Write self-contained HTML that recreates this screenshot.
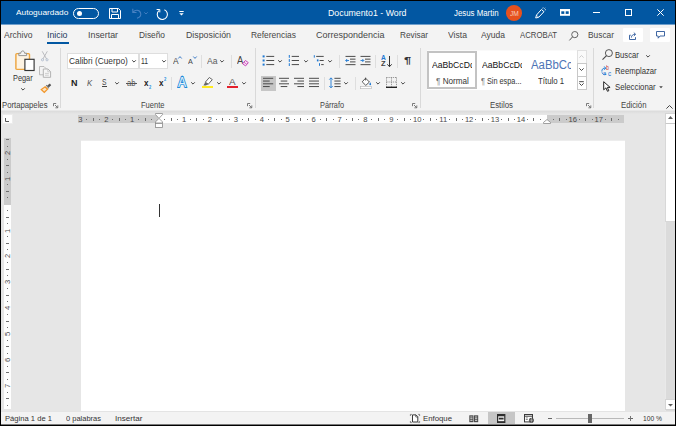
<!DOCTYPE html>
<html lang="es">
<head>
<meta charset="utf-8">
<title>Documento1 - Word</title>
<style>
html,body{margin:0;padding:0;background:#000;}
body{width:676px;height:426px;overflow:hidden;font-family:"Liberation Sans",sans-serif;}
#app{position:relative;width:676px;height:426px;background:#000;overflow:hidden;}
#app>*{position:absolute;overflow:hidden;box-sizing:border-box;}
#app div, #app span, #app svg, #app a, #app button, #app label{position:absolute;box-sizing:border-box;}
#app svg{overflow:visible;}
.t{white-space:nowrap;line-height:1;transform-origin:0 50%;display:block;}

</style>
</head>
<body>
<div id="app">
<header class="titlebar" style="left:1px;top:1px;width:674px;height:24px;background:#0257a2;border-bottom:1px solid #6f9fcc;">
<span class="t" style="left:14.70px;top:8.10px;font-size:8.1px;color:#fff;transform:scaleX(1.0283);">Autoguardado</span>
<div class="toggle" style="left:72px;top:6.5px;width:26px;height:11px;border:1px solid #fff;border-radius:6px;"><div style="left:2.5px;top:2px;width:5px;height:5px;border-radius:50%;background:#fff"></div></div>
<svg style="left:108px;top:7px;" width="12" height="11" viewBox="0 0 12 11"><path d="M0.5 0.5 H9.5 L11.5 2.5 V10.5 H0.5 Z M3 0.5 V4 H8.5 V0.5 M2.5 10.5 V6.5 H9.5 V10.5" fill="none" stroke="#fff" stroke-width="1"/></svg>
<svg style="left:130.5px;top:7px;" width="10" height="11" viewBox="0 0 10 11"><path d="M0.8 0.8 V4.5 H4.5 M1 4.3 C3 1.5 7.5 1.5 8.6 5 C9.3 7.5 7.5 9.5 5 10.3" fill="none" stroke="#4781c2" stroke-width="1.1"/></svg>
<svg style="left:142.5px;top:11px;" width="4" height="3" viewBox="0 0 4 3"><path d="M0.3 0.3 L2 2 L3.7 0.3" fill="none" stroke="#4781c2" stroke-width="0.9"/></svg>
<svg style="left:154.5px;top:6.5px;" width="12" height="12" viewBox="0 0 12 12"><path d="M0.6 1.5 H3.8 V4.4" fill="none" stroke="#fff" stroke-width="1"/><path d="M2.9 2.6 A5.1 5.1 0 1 0 8.4 1.7" fill="none" stroke="#fff" stroke-width="1.1"/></svg>
<svg style="left:178px;top:10px;" width="5" height="5" viewBox="0 0 5 5"><path d="M0.3 0.5 H4.7" stroke="#fff" stroke-width="1"/><path d="M0.3 2.3 L2.5 4.5 L4.7 2.3 Z" fill="#fff"/></svg>
<span class="t" style="left:326.50px;top:8.10px;font-size:8.3px;color:#fff;transform:scaleX(1.0595);">Documento1  -  Word</span>
<span class="t" style="left:452.50px;top:8.10px;font-size:8.3px;color:#fff;transform:scaleX(0.9462);">Jesus Martin</span>
<div class="avatar" style="left:504.5px;top:4px;width:16.5px;height:16px;border-radius:50%;background:#e6511e;"></div>
<span class="t" style="left:508.50px;top:9.10px;font-size:7px;color:#f8cfbb;transform:scaleX(0.9418);">JM</span>
<svg style="left:533.5px;top:6px;" width="12" height="12" viewBox="0 0 12 12"><path d="M1.5 8 L6.4 2.5 L9 4.7 L3.7 10.3 L0.7 11 Z" fill="none" stroke="#fff" stroke-width="1" stroke-linejoin="round"/><path d="M1.6 8.2 L3.5 10.1" stroke="#fff" stroke-width=".7"/><path d="M7.7 1.6 L8.2 0.4 M9.8 3 L11 2.5 M9.3 1.7 L10.2 0.8" stroke="#fff" stroke-width=".8"/></svg>
<svg style="left:559px;top:8px;" width="10" height="6.8" viewBox="0 0 10 6.8"><rect x="0" y="0" width="10" height="6.8" fill="#fff"/><rect x="1.3" y="2.3" width="3" height="2.6" fill="#0257a2"/><rect x="5.7" y="2.3" width="3" height="2.6" fill="#0257a2"/></svg>
<svg style="left:592px;top:11px;" width="7" height="1" viewBox="0 0 7 1"><rect width="7" height="1" fill="#fff"/></svg>
<svg style="left:624px;top:8px;" width="7" height="7" viewBox="0 0 7 7"><rect x="0.5" y="0.5" width="6" height="6" fill="none" stroke="#fff" stroke-width="1"/></svg>
<svg style="left:655.5px;top:8px;" width="7" height="7" viewBox="0 0 7 7"><path d="M0.3 0.3 L6.7 6.7 M6.7 0.3 L0.3 6.7" stroke="#fff" stroke-width="1"/></svg>
</header>
<nav class="tabs" style="left:1px;top:25px;width:674px;height:20px;background:#f3f3f3;">
<a class="t" style="left:2.50px;top:6.10px;font-size:8.6px;color:#464646;transform:scaleX(0.9945);">Archivo</a>
<a class="t" style="left:46.00px;top:6.10px;font-size:8.6px;color:#23395d;transform:scaleX(1.0218);">Inicio</a>
<a class="t" style="left:86.50px;top:6.10px;font-size:8.6px;color:#464646;transform:scaleX(1.0295);">Insertar</a>
<a class="t" style="left:138.00px;top:6.10px;font-size:8.6px;color:#464646;transform:scaleX(0.9714);">Diseño</a>
<a class="t" style="left:184.50px;top:6.10px;font-size:8.6px;color:#464646;transform:scaleX(1.0238);">Disposición</a>
<a class="t" style="left:249.50px;top:6.10px;font-size:8.6px;color:#464646;transform:scaleX(0.9813);">Referencias</a>
<a class="t" style="left:315.00px;top:6.10px;font-size:8.6px;color:#464646;transform:scaleX(1.0466);">Correspondencia</a>
<a class="t" style="left:398.50px;top:6.10px;font-size:8.6px;color:#464646;transform:scaleX(0.9609);">Revisar</a>
<a class="t" style="left:446.50px;top:6.10px;font-size:8.6px;color:#464646;transform:scaleX(1.0025);">Vista</a>
<a class="t" style="left:480.00px;top:6.10px;font-size:8.6px;color:#464646;transform:scaleX(0.9910);">Ayuda</a>
<a class="t" style="left:518.50px;top:6.10px;font-size:8.6px;color:#464646;transform:scaleX(0.9045);">ACROBAT</a>
<div style="left:45.5px;top:17px;width:22.5px;height:2px;background:#0257a2;"></div>
<svg style="left:568px;top:5.5px;" width="9.5" height="10" viewBox="0 0 9.5 10"><circle cx="5.8" cy="3.6" r="3.1" fill="none" stroke="#555" stroke-width=".9"/><path d="M3.6 5.8 L0.4 9.4" stroke="#555" stroke-width="1"/></svg>
<span class="t" style="left:586.50px;top:6.10px;font-size:8.6px;color:#464646;transform:scaleX(0.9720);">Buscar</span>
<div class="btn" style="left:621.5px;top:3px;width:20.5px;height:14px;background:#fff;border-radius:1px;"><svg style="left:6.5px;top:3.5px" width="8" height="8" viewBox="0 0 8 8"><path d="M1.8 3.2 H0.5 V7.5 H6.5 V5.2" fill="none" stroke="#2b579a" stroke-width=".9"/><path d="M2.4 5.6 C2.4 3.4 3.9 2.3 6.2 2.3 M4.8 0.6 L6.6 2.3 L4.8 4" fill="none" stroke="#2b579a" stroke-width=".9"/></svg></div>
<div class="btn" style="left:649px;top:3px;width:20px;height:14px;background:#fff;border-radius:1px;"><svg style="left:6px;top:3px" width="9" height="8" viewBox="0 0 9 8"><path d="M0.5 0.5 H8.5 V5 H4 L2.2 7.2 V5 H0.5 Z" fill="none" stroke="#2b579a" stroke-width=".9"/></svg></div>
</nav>
<section class="ribbon" style="left:1px;top:45px;width:674px;height:66px;background:#f3f3f3;border-bottom:1px solid #e8e8e8;">
<div style="left:59px;top:3px;width:1px;height:60px;background:#d9d9d9;"></div>
<div style="left:254px;top:3px;width:1px;height:60px;background:#d9d9d9;"></div>
<div style="left:419px;top:3px;width:1px;height:60px;background:#d9d9d9;"></div>
<div style="left:592px;top:3px;width:1px;height:60px;background:#d9d9d9;"></div>
<div style="left:200px;top:9.5px;width:1px;height:13.5px;background:#dedede;"></div>
<div style="left:229.5px;top:9.5px;width:1px;height:13.5px;background:#dedede;"></div>
<div style="left:169.5px;top:31.5px;width:1px;height:13.5px;background:#dedede;"></div>
<div style="left:338px;top:9.5px;width:1px;height:13.5px;background:#dedede;"></div>
<div style="left:373.5px;top:9.5px;width:1px;height:13.5px;background:#dedede;"></div>
<div style="left:396px;top:9.5px;width:1px;height:13.5px;background:#dedede;"></div>
<div style="left:323px;top:31.5px;width:1px;height:13.5px;background:#dedede;"></div>
<div style="left:353.5px;top:31.5px;width:1px;height:13.5px;background:#dedede;"></div>
<span class="t" style="left:1.00px;top:56.10px;font-size:8.4px;color:#444;transform:scaleX(0.9218);">Portapapeles</span>
<span class="t" style="left:140.00px;top:56.10px;font-size:8.4px;color:#444;transform:scaleX(0.9011);">Fuente</span>
<span class="t" style="left:319.00px;top:56.10px;font-size:8.4px;color:#444;transform:scaleX(0.8737);">Párrafo</span>
<span class="t" style="left:489.00px;top:56.10px;font-size:8.4px;color:#444;transform:scaleX(0.9322);">Estilos</span>
<span class="t" style="left:619.50px;top:56.10px;font-size:8.4px;color:#444;transform:scaleX(0.9283);">Edición</span>
<svg style="left:51.9px;top:58.1px;" width="5" height="5" viewBox="0 0 5 5"><path d="M0.5 3.2 V0.5 H3.2 M2 2 L4.6 4.6 M4.8 2.4 V4.8 H2.4" fill="none" stroke="#666" stroke-width=".85"/></svg>
<svg style="left:245.8px;top:58.1px;" width="5" height="5" viewBox="0 0 5 5"><path d="M0.5 3.2 V0.5 H3.2 M2 2 L4.6 4.6 M4.8 2.4 V4.8 H2.4" fill="none" stroke="#666" stroke-width=".85"/></svg>
<svg style="left:410.7px;top:58.1px;" width="5" height="5" viewBox="0 0 5 5"><path d="M0.5 3.2 V0.5 H3.2 M2 2 L4.6 4.6 M4.8 2.4 V4.8 H2.4" fill="none" stroke="#666" stroke-width=".85"/></svg>
<svg style="left:584.5px;top:58.1px;" width="5" height="5" viewBox="0 0 5 5"><path d="M0.5 3.2 V0.5 H3.2 M2 2 L4.6 4.6 M4.8 2.4 V4.8 H2.4" fill="none" stroke="#666" stroke-width=".85"/></svg>
<svg style="left:664.5px;top:60px;" width="7" height="4" viewBox="0 0 7 4"><path d="M0.4 3.6 L3.5 0.5 L6.6 3.6" fill="none" stroke="#444" stroke-width="1"/></svg>
<svg style="left:14px;top:5px;" width="20" height="21" viewBox="0 0 20 21"><rect x="0.9" y="3.6" width="13.6" height="15.8" rx="1" fill="#fdf3e3" stroke="#eda43c" stroke-width="1.4"/><path d="M3.8 5.6 V3.2 H5.8 C5.8 0.2 9.6 0.2 9.6 3.2 H11.6 V5.6 Z" fill="#f3f3f3" stroke="#8a8a8a" stroke-width=".9"/><rect x="9.9" y="9.3" width="9.2" height="11.2" fill="#fff" stroke="#333" stroke-width="1.15"/></svg>
<span class="t" style="left:12.00px;top:29.10px;font-size:8.4px;color:#333;transform:scaleX(0.8766);">Pegar</span>
<svg style="left:19.5px;top:43.25px;" width="4" height="2.5" viewBox="0 0 4 2.5"><path d="M0.2 0.3 L2 2.1 L3.8 0.3" fill="none" stroke="#444" stroke-width="1"/></svg>
<svg style="left:40px;top:5.5px;" width="7.5" height="10.5" viewBox="0 0 7.5 10.5"><path d="M1.2 0.3 L5.6 8 M6.3 0.3 L1.9 8" stroke="#b4b6ba" stroke-width=".9" fill="none"/><circle cx="1.5" cy="8.8" r="1.1" fill="none" stroke="#a9b6c9" stroke-width=".8"/><circle cx="6" cy="8.8" r="1.1" fill="none" stroke="#a9b6c9" stroke-width=".8"/></svg>
<svg style="left:38px;top:21.3px;" width="12" height="12" viewBox="0 0 12 12"><path d="M0.5 0.5 H5 L7 2.5 V8.8 H0.5 Z" fill="#f3f3f3" stroke="#b5b5b5" stroke-width=".9"/><path d="M4.3 3 H9 L11.6 5.6 V11.3 H4.3 Z" fill="#f6f6f6" stroke="#ababab" stroke-width=".9"/><path d="M8.8 3.2 V5.8 H11.4 M6 7.4 H9.8 M6 9.2 H9.8" fill="none" stroke="#bdbdbd" stroke-width=".7"/></svg>
<svg style="left:38.5px;top:37.5px;" width="11.5" height="10.5" viewBox="0 0 11.5 10.5"><path d="M7.2 2.5 L9.9 0.5 L11.2 2.2 L8.7 4.4 Z" fill="#555"/><path d="M5.8 2.5 L6.7 1.8 L9.3 4.9 L8.4 5.6 Z" fill="#777"/><path d="M5.2 2.9 L8.6 6.1 L4.3 10.2 L0.3 6.4 Z" fill="#f1962a"/><path d="M4.9 4.8 L6.7 6.3 L4.2 8.6 L2.2 6.6 Z" fill="#fde3c0"/></svg>
<div class="combo" style="left:66px;top:8px;width:71.5px;height:15.5px;background:#fff;border:1px solid #dedede;"></div>
<div class="combo" style="left:138px;top:8px;width:28.5px;height:15.5px;background:#fff;border:1px solid #dedede;"></div>
<span class="t" style="left:67.70px;top:12.10px;font-size:8.3px;color:#333;transform:scaleX(1.0041);">Calibri (Cuerpo)</span>
<svg style="left:131px;top:15.25px;" width="4" height="2.5" viewBox="0 0 4 2.5"><path d="M0.2 0.3 L2 2.1 L3.8 0.3" fill="none" stroke="#444" stroke-width="1"/></svg>
<span class="t" style="left:140.00px;top:13.10px;font-size:8.2px;color:#333;transform:scaleX(0.8235);">11</span>
<svg style="left:160.5px;top:15.25px;" width="4" height="2.5" viewBox="0 0 4 2.5"><path d="M0.2 0.3 L2 2.1 L3.8 0.3" fill="none" stroke="#444" stroke-width="1"/></svg>
<span class="t" style="left:171.60px;top:12.10px;font-size:8.8px;color:#444;transform:scaleX(0.9532);">A</span>
<svg style="left:176.8px;top:10.5px;" width="4" height="3" viewBox="0 0 4 3"><path d="M0.3 2.5 L2 0.6 L3.7 2.5" fill="none" stroke="#2b6fc2" stroke-width=".9"/></svg>
<span class="t" style="left:187.00px;top:13.10px;font-size:8px;color:#444;transform:scaleX(0.8982);">A</span>
<svg style="left:191.5px;top:10.5px;" width="4" height="3" viewBox="0 0 4 3"><path d="M0.3 0.5 L2 2.4 L3.7 0.5" fill="none" stroke="#2b6fc2" stroke-width=".9"/></svg>
<span class="t" style="left:205.50px;top:12.10px;font-size:9px;color:#5a5a5a;transform:scaleX(0.9532);">Aa</span>
<svg style="left:219px;top:15.25px;" width="4" height="2.5" viewBox="0 0 4 2.5"><path d="M0.2 0.3 L2 2.1 L3.8 0.3" fill="none" stroke="#444" stroke-width="1"/></svg>
<span class="t" style="left:236.30px;top:10.10px;font-size:11.5px;color:#444;transform:scaleX(0.8212);">A</span>
<svg style="left:241px;top:15px;" width="7" height="6.5" viewBox="0 0 7 6.5"><path d="M3.4 0.5 L6.3 2.6 L3.6 5.9 L0.6 3.8 Z" fill="#fbe6f6" stroke="#c239b3" stroke-width=".9"/><path d="M1.9 2.2 L4.9 4.4" stroke="#c239b3" stroke-width=".7"/></svg>
<span class="t" style="left:69.70px;top:33.10px;font-size:9.8px;color:#222;transform:scaleX(0.9183);font-weight:bold;">N</span>
<span class="t" style="left:86.00px;top:34.10px;font-size:9.3px;color:#555;transform:scaleX(0.8383);font-style:italic;">K</span>
<span class="t" style="left:101.30px;top:33.10px;font-size:9px;color:#444;transform:scaleX(0.7481);">S</span>
<div style="left:101px;top:41px;width:5px;height:1px;background:#444;"></div>
<svg style="left:113.5px;top:36.75px;" width="4" height="2.5" viewBox="0 0 4 2.5"><path d="M0.2 0.3 L2 2.1 L3.8 0.3" fill="none" stroke="#444" stroke-width="1"/></svg>
<span class="t" style="left:125.80px;top:34.10px;font-size:9px;color:#555;transform:scaleX(0.8387);">ab</span>
<div style="left:124.5px;top:38px;width:11px;height:1px;background:#555;"></div>
<span class="t" style="left:142.50px;top:33.10px;font-size:9.5px;color:#222;transform:scaleX(0.8496);font-weight:bold;">x</span>
<span class="t" style="left:148.20px;top:41.10px;font-size:4.6px;color:#1e90e0;transform:scaleX(0.8585);font-weight:bold;">2</span>
<span class="t" style="left:157.50px;top:33.10px;font-size:9.5px;color:#222;transform:scaleX(0.8496);font-weight:bold;">x</span>
<span class="t" style="left:163.00px;top:33.10px;font-size:4.6px;color:#1e90e0;transform:scaleX(0.8976);font-weight:bold;">2</span>
<span class="t" style="left:177.20px;top:31.10px;font-size:13.8px;color:#e4f1fb;transform:scaleX(0.8801);-webkit-text-stroke:1.9px #1f8cda;paint-order:stroke fill;">A</span>
<svg style="left:190px;top:36.75px;" width="4" height="2.5" viewBox="0 0 4 2.5"><path d="M0.2 0.3 L2 2.1 L3.8 0.3" fill="none" stroke="#444" stroke-width="1"/></svg>
<svg style="left:201px;top:31.5px;" width="11" height="9" viewBox="0 0 11 9"><path d="M7.3 0.5 L10.3 2.6 L6.3 7.2 L3.3 5.2 Z" fill="#fff" stroke="#555" stroke-width=".9"/><path d="M3.3 5.2 L6.3 7.2 L3.8 8.6 L1.4 8.4 Z" fill="#666"/></svg>
<div style="left:200.5px;top:41px;width:11px;height:2.3px;background:#ffea1e;"></div>
<svg style="left:216px;top:36.75px;" width="4" height="2.5" viewBox="0 0 4 2.5"><path d="M0.2 0.3 L2 2.1 L3.8 0.3" fill="none" stroke="#444" stroke-width="1"/></svg>
<span class="t" style="left:228.20px;top:32.10px;font-size:9.8px;color:#555;transform:scaleX(1.0081);">A</span>
<div style="left:226px;top:41px;width:11px;height:2.3px;background:#e3202c;"></div>
<svg style="left:241px;top:36.75px;" width="4" height="2.5" viewBox="0 0 4 2.5"><path d="M0.2 0.3 L2 2.1 L3.8 0.3" fill="none" stroke="#444" stroke-width="1"/></svg>
<svg style="left:261px;top:9px;" width="13" height="13" viewBox="0 0 13 13"><rect x="0.6" y="1.4" width="2" height="2" fill="#1e78d2"/><path d="M4.3 2.4 H12.2" stroke="#4a4a4a" stroke-width="1"/><rect x="0.6" y="5.5" width="2" height="2" fill="#1e78d2"/><path d="M4.3 6.5 H12.2" stroke="#4a4a4a" stroke-width="1"/><rect x="0.6" y="9.6" width="2" height="2" fill="#1e78d2"/><path d="M4.3 10.6 H12.2" stroke="#4a4a4a" stroke-width="1"/></svg>
<svg style="left:277.4px;top:15.25px;" width="4" height="2.5" viewBox="0 0 4 2.5"><path d="M0.2 0.3 L2 2.1 L3.8 0.3" fill="none" stroke="#444" stroke-width="1"/></svg>
<svg style="left:287px;top:9px;" width="12" height="13" viewBox="0 0 12 13"><rect x="0.8" y="1" width="1" height="2.8" fill="#1e78d2"/><path d="M3.7 2.4 H11" stroke="#4a4a4a" stroke-width="1"/><rect x="0.8" y="5.1" width="1" height="2.8" fill="#1e78d2"/><path d="M3.7 6.5 H11" stroke="#4a4a4a" stroke-width="1"/><rect x="0.8" y="9.2" width="1" height="2.8" fill="#1e78d2"/><path d="M3.7 10.6 H11" stroke="#4a4a4a" stroke-width="1"/></svg>
<svg style="left:302.8px;top:15.25px;" width="4" height="2.5" viewBox="0 0 4 2.5"><path d="M0.2 0.3 L2 2.1 L3.8 0.3" fill="none" stroke="#444" stroke-width="1"/></svg>
<svg style="left:312px;top:9px;" width="12" height="13" viewBox="0 0 12 13"><rect x="0.8" y="1.2" width="1" height="2.4" fill="#1e78d2"/><path d="M3.2 2.4 H10.7" stroke="#4a4a4a" stroke-width="1"/><rect x="3.9" y="5.4" width="1.6" height="2" fill="#1e78d2"/><path d="M6.6 6.5 H10.7" stroke="#4a4a4a" stroke-width="1"/><rect x="6" y="9.2" width="1" height="2.6" fill="#1e78d2"/><path d="M8.2 10.6 H10.7" stroke="#4a4a4a" stroke-width="1"/></svg>
<svg style="left:326.7px;top:15.25px;" width="4" height="2.5" viewBox="0 0 4 2.5"><path d="M0.2 0.3 L2 2.1 L3.8 0.3" fill="none" stroke="#444" stroke-width="1"/></svg>
<svg style="left:343.5px;top:10px;" width="11" height="11" viewBox="0 0 11 11"><path d="M0.5 1.4 H10.5" stroke="#4a4a4a" stroke-width="1"/><path d="M5 4.15 H10.5" stroke="#4a4a4a" stroke-width="1"/><path d="M5 6.9 H10.5" stroke="#4a4a4a" stroke-width="1"/><path d="M0.5 9.65 H10.5" stroke="#4a4a4a" stroke-width="1"/><path d="M4 5.5 H0.8 M2.2 4 L0.7 5.5 L2.2 7" fill="none" stroke="#1e78d2" stroke-width=".9"/></svg>
<svg style="left:359px;top:10px;" width="11" height="11" viewBox="0 0 11 11"><path d="M0.5 1.4 H10.5" stroke="#4a4a4a" stroke-width="1"/><path d="M5 4.15 H10.5" stroke="#4a4a4a" stroke-width="1"/><path d="M5 6.9 H10.5" stroke="#4a4a4a" stroke-width="1"/><path d="M0.5 9.65 H10.5" stroke="#4a4a4a" stroke-width="1"/><path d="M0.5 5.5 H3.7 M2.3 4 L3.8 5.5 L2.3 7" fill="none" stroke="#1e78d2" stroke-width=".9"/></svg>
<span class="t" style="left:380.00px;top:10.10px;font-size:6.6px;color:#1e78d2;transform:scaleX(1.0072);font-weight:bold;">A</span>
<span class="t" style="left:380.00px;top:16.10px;font-size:6.4px;color:#444;transform:scaleX(1.1776);font-weight:bold;">Z</span>
<svg style="left:385.8px;top:10.5px;" width="5" height="11.5" viewBox="0 0 5 11.5"><path d="M2.5 0 V10.6 M0.3 8.3 L2.5 10.7 L4.7 8.3" fill="none" stroke="#333" stroke-width="1"/></svg>
<span class="t" style="left:402.60px;top:11.10px;font-size:8.8px;color:#333;transform:scaleX(1.4675);font-weight:bold;">¶</span>
<div style="left:260px;top:31px;width:15px;height:15px;background:#c6c6c6;"></div>
<svg style="left:262.3px;top:32px;" width="11" height="11" viewBox="0 0 11 11"><path d="M0 1.3 H10.2" stroke="#4a4a4a" stroke-width="1"/><path d="M0 4.05 H6.7" stroke="#4a4a4a" stroke-width="1"/><path d="M0 6.8 H10.2" stroke="#4a4a4a" stroke-width="1"/><path d="M0 9.55 H6.7" stroke="#4a4a4a" stroke-width="1"/></svg>
<svg style="left:277.7px;top:32px;" width="11" height="11" viewBox="0 0 11 11"><path d="M0 1.3 H10" stroke="#4a4a4a" stroke-width="1"/><path d="M1.7 4.05 H8.3" stroke="#4a4a4a" stroke-width="1"/><path d="M0 6.8 H10" stroke="#4a4a4a" stroke-width="1"/><path d="M1.7 9.55 H8.3" stroke="#4a4a4a" stroke-width="1"/></svg>
<svg style="left:292.8px;top:32px;" width="11" height="11" viewBox="0 0 11 11"><path d="M0 1.3 H10" stroke="#4a4a4a" stroke-width="1"/><path d="M3.4 4.05 H10" stroke="#4a4a4a" stroke-width="1"/><path d="M0 6.8 H10" stroke="#4a4a4a" stroke-width="1"/><path d="M3.4 9.55 H10" stroke="#4a4a4a" stroke-width="1"/></svg>
<svg style="left:307.8px;top:32px;" width="11" height="11" viewBox="0 0 11 11"><path d="M0 1.3 H10" stroke="#4a4a4a" stroke-width="1"/><path d="M0 4.05 H10" stroke="#4a4a4a" stroke-width="1"/><path d="M0 6.8 H10" stroke="#4a4a4a" stroke-width="1"/><path d="M0 9.55 H10" stroke="#4a4a4a" stroke-width="1"/></svg>
<svg style="left:328px;top:32px;" width="12" height="12" viewBox="0 0 12 12"><path d="M2 1 V10.6 M0.3 2.6 L2 0.8 L3.7 2.6 M0.3 9 L2 10.8 L3.7 9" fill="none" stroke="#1e78d2" stroke-width=".9"/><path d="M5.4 1.3 H11.6" stroke="#4a4a4a" stroke-width="1"/><path d="M5.4 4.05 H11.6" stroke="#4a4a4a" stroke-width="1"/><path d="M5.4 6.8 H11.6" stroke="#4a4a4a" stroke-width="1"/><path d="M5.4 9.55 H11.6" stroke="#4a4a4a" stroke-width="1"/></svg>
<svg style="left:342.7px;top:36.75px;" width="4" height="2.5" viewBox="0 0 4 2.5"><path d="M0.2 0.3 L2 2.1 L3.8 0.3" fill="none" stroke="#444" stroke-width="1"/></svg>
<svg style="left:359px;top:31.5px;" width="12" height="12" viewBox="0 0 12 12"><path d="M5.6 1.2 L9.4 5 L5.8 8.4 L2.2 4.8 Z" fill="#fff" stroke="#444" stroke-width=".9"/><path d="M5.6 0.6 V3.4" stroke="#444" stroke-width=".9"/><path d="M10.2 5.2 C11.4 7 11.4 8.2 10.2 8.2 C9.1 8.2 9.1 7 10.2 5.2 Z" fill="#1e78d2"/><rect x="0.3" y="9.6" width="11.2" height="2.1" fill="#fff" stroke="#b5b5b5" stroke-width=".6"/></svg>
<svg style="left:374.8px;top:36.75px;" width="4" height="2.5" viewBox="0 0 4 2.5"><path d="M0.2 0.3 L2 2.1 L3.8 0.3" fill="none" stroke="#444" stroke-width="1"/></svg>
<svg style="left:384.5px;top:32px;" width="11" height="11.5" viewBox="0 0 11 11.5"><path d="M0.5 0.5 H10.5 M0.5 5 H10.5 M0.5 0.5 V9.5 M5.5 0.5 V9.5 M10.5 0.5 V9.5" fill="none" stroke="#777" stroke-width=".9" stroke-dasharray="1 1.1"/><path d="M0 10.3 H11" stroke="#222" stroke-width="1.4"/></svg>
<svg style="left:400px;top:36.75px;" width="4" height="2.5" viewBox="0 0 4 2.5"><path d="M0.2 0.3 L2 2.1 L3.8 0.3" fill="none" stroke="#444" stroke-width="1"/></svg>
<div class="gallery" style="left:426px;top:5px;width:149.5px;height:40px;background:#fff;border-top:1px solid #fafafa;"></div>
<div class="sel" style="left:426px;top:6px;width:50px;height:38px;border:2px solid #c3c3c3;background:#fff;"></div>
<span class="t" style="left:434.50px;top:33.10px;font-size:8.2px;color:#333;transform:scaleX(0.9946);"><span style="position:static;color:#777">¶</span> Normal</span>
<span class="t" style="left:480.20px;top:33.10px;font-size:8.2px;color:#333;transform:scaleX(0.8926);"><span style="position:static;color:#777">¶</span> Sin espa...</span>
<span class="t" style="left:536.60px;top:33.10px;font-size:8.2px;color:#333;transform:scaleX(0.9593);">Título 1</span>
<div style="left:575.5px;top:5px;width:10.5px;height:13.5px;background:#fafafa;border:1px solid #e0e0e0;"></div>
<div style="left:575.5px;top:18px;width:10.5px;height:13.5px;background:#fff;border:1px solid #c8c8c8;"></div>
<div style="left:575.5px;top:31px;width:10.5px;height:14px;background:#fff;border:1px solid #c8c8c8;"></div>
<svg style="left:578.4px;top:9.8px;" width="5" height="3" viewBox="0 0 5 3"><path d="M0.4 2.6 L2.5 0.5 L4.6 2.6" fill="none" stroke="#c8c8c8" stroke-width=".9"/></svg>
<svg style="left:578.4px;top:23.4px;" width="5" height="3" viewBox="0 0 5 3"><path d="M0.4 0.4 L2.5 2.5 L4.6 0.4" fill="none" stroke="#444" stroke-width="1"/></svg>
<svg style="left:578.4px;top:35.6px;" width="5" height="6" viewBox="0 0 5 6"><path d="M0.2 0.7 H4.8" stroke="#444" stroke-width="1"/><path d="M0.4 2.4 L2.5 4.5 L4.6 2.4" fill="none" stroke="#444" stroke-width="1"/></svg>
<svg style="left:601px;top:4px;" width="11.5" height="11" viewBox="0 0 11.5 11"><circle cx="6.9" cy="4.1" r="3.5" fill="none" stroke="#444" stroke-width=".9"/><path d="M4.5 6.7 L0.5 10.6" stroke="#444" stroke-width="1.1"/></svg>
<span class="t" style="left:613.80px;top:6.10px;font-size:8.6px;color:#333;transform:scaleX(0.8897);">Buscar</span>
<svg style="left:645px;top:9.55px;" width="4" height="2.5" viewBox="0 0 4 2.5"><path d="M0.2 0.3 L2 2.1 L3.8 0.3" fill="none" stroke="#444" stroke-width="1"/></svg>
<svg style="left:599.5px;top:20px;" width="11" height="11" viewBox="0 0 11 11"><path d="M0.9 6.6 C0.5 4.2 2.4 2.6 4.6 3.2 M3.2 1.4 L4.9 3.3 L2.9 4.7" fill="none" stroke="#1e78d2" stroke-width=".9"/><path d="M5.2 9.4 C3.3 10.3 1.3 9.2 1 7.4" fill="none" stroke="#1e78d2" stroke-width=".9"/></svg>
<span class="t" style="left:605.20px;top:20.10px;font-size:6.8px;color:#c8372d;transform:scaleX(0.7405);">b</span>
<span class="t" style="left:606.80px;top:26.10px;font-size:6.6px;color:#1e78d2;transform:scaleX(0.9706);">c</span>
<span class="t" style="left:601.60px;top:25.10px;font-size:6px;color:#1e78d2;transform:scaleX(0.9570);">a</span>
<span class="t" style="left:613.80px;top:22.10px;font-size:8.6px;color:#333;transform:scaleX(0.8998);">Reemplazar</span>
<svg style="left:602px;top:36.2px;" width="8" height="11" viewBox="0 0 8 11"><path d="M0.7 0.7 V8.8 L2.9 6.9 L4.5 10.3 L5.8 9.7 L4.3 6.4 H7.1 Z" fill="#fff" stroke="#222" stroke-width="1"/></svg>
<span class="t" style="left:613.80px;top:38.10px;font-size:8.6px;color:#333;transform:scaleX(0.9063);">Seleccionar</span>
<svg style="left:657.6px;top:40.6px;" width="4" height="2.5" viewBox="0 0 4 2.5"><path d="M0.2 0.2 L2 2.2 L3.8 0.2 Z" fill="#444"/></svg>
</section>
<div class="cell" style="left:430px;top:58px;width:41.7px;height:14px;background:transparent;">
<span class="t" style="left:2.30px;top:3.10px;font-size:8.5px;color:#111;transform:scaleX(1.0150);">AaBbCcDc</span>
</div>
<div class="cell" style="left:480px;top:58px;width:41.8px;height:14px;background:transparent;">
<span class="t" style="left:2.20px;top:3.10px;font-size:8.5px;color:#111;transform:scaleX(1.0174);">AaBbCcDc</span>
</div>
<div class="cell" style="left:529px;top:56px;width:42px;height:17px;background:transparent;">
<span class="t" style="left:2.00px;top:3.10px;font-size:12px;color:#4d74b6;transform:scaleX(0.9471);">AaBbCc</span>
</div>
<main class="workspace" style="left:1px;top:111px;width:674px;height:300px;background:#e6e6e6;">
<div style="left:0px;top:0px;width:674px;height:3px;background:linear-gradient(#dbdbdb,#e6e6e6);"></div>
<div style="left:1px;top:3px;width:10.5px;height:10px;background:#fdfdfd;border:1px solid #ececec;"></div>
<svg style="left:4.1px;top:7px;" width="4" height="4" viewBox="0 0 4 4"><path d="M0.5 0 V3.5 H4" fill="none" stroke="#555" stroke-width="1"/></svg>
<div class="hruler" style="left:77px;top:4px;width:546px;height:8px;background:#fefefe;"></div>
<div style="left:77px;top:4px;width:79.5px;height:8px;background:#cbcbcb;"></div>
<div style="left:546px;top:4px;width:77px;height:8px;background:#cbcbcb;"></div>
<span class="t" style="left:79.34px;top:5.10px;font-size:7.6px;color:#4a4a4a;transform:scaleX(1.0000);width:14px;margin-left:-7px;text-align:center;">3</span>
<span class="t" style="left:105.26px;top:5.10px;font-size:7.6px;color:#4a4a4a;transform:scaleX(1.0000);width:14px;margin-left:-7px;text-align:center;">2</span>
<span class="t" style="left:131.18px;top:5.10px;font-size:7.6px;color:#4a4a4a;transform:scaleX(1.0000);width:14px;margin-left:-7px;text-align:center;">1</span>
<span class="t" style="left:183.02px;top:5.10px;font-size:7.6px;color:#4a4a4a;transform:scaleX(1.0000);width:14px;margin-left:-7px;text-align:center;">1</span>
<span class="t" style="left:208.94px;top:5.10px;font-size:7.6px;color:#4a4a4a;transform:scaleX(1.0000);width:14px;margin-left:-7px;text-align:center;">2</span>
<span class="t" style="left:234.86px;top:5.10px;font-size:7.6px;color:#4a4a4a;transform:scaleX(1.0000);width:14px;margin-left:-7px;text-align:center;">3</span>
<span class="t" style="left:260.78px;top:5.10px;font-size:7.6px;color:#4a4a4a;transform:scaleX(1.0000);width:14px;margin-left:-7px;text-align:center;">4</span>
<span class="t" style="left:286.70px;top:5.10px;font-size:7.6px;color:#4a4a4a;transform:scaleX(1.0000);width:14px;margin-left:-7px;text-align:center;">5</span>
<span class="t" style="left:312.62px;top:5.10px;font-size:7.6px;color:#4a4a4a;transform:scaleX(1.0000);width:14px;margin-left:-7px;text-align:center;">6</span>
<span class="t" style="left:338.54px;top:5.10px;font-size:7.6px;color:#4a4a4a;transform:scaleX(1.0000);width:14px;margin-left:-7px;text-align:center;">7</span>
<span class="t" style="left:364.46px;top:5.10px;font-size:7.6px;color:#4a4a4a;transform:scaleX(1.0000);width:14px;margin-left:-7px;text-align:center;">8</span>
<span class="t" style="left:390.38px;top:5.10px;font-size:7.6px;color:#4a4a4a;transform:scaleX(1.0000);width:14px;margin-left:-7px;text-align:center;">9</span>
<span class="t" style="left:416.30px;top:5.10px;font-size:7.6px;color:#4a4a4a;transform:scaleX(1.0000);width:14px;margin-left:-7px;text-align:center;">10</span>
<span class="t" style="left:442.22px;top:5.10px;font-size:7.6px;color:#4a4a4a;transform:scaleX(1.0000);width:14px;margin-left:-7px;text-align:center;">11</span>
<span class="t" style="left:468.14px;top:5.10px;font-size:7.6px;color:#4a4a4a;transform:scaleX(1.0000);width:14px;margin-left:-7px;text-align:center;">12</span>
<span class="t" style="left:494.06px;top:5.10px;font-size:7.6px;color:#4a4a4a;transform:scaleX(1.0000);width:14px;margin-left:-7px;text-align:center;">13</span>
<span class="t" style="left:519.98px;top:5.10px;font-size:7.6px;color:#4a4a4a;transform:scaleX(1.0000);width:14px;margin-left:-7px;text-align:center;">14</span>
<span class="t" style="left:571.82px;top:5.10px;font-size:7.6px;color:#4a4a4a;transform:scaleX(1.0000);width:14px;margin-left:-7px;text-align:center;">16</span>
<span class="t" style="left:597.74px;top:5.10px;font-size:7.6px;color:#4a4a4a;transform:scaleX(1.0000);width:14px;margin-left:-7px;text-align:center;">17</span>
<svg style="left:77px;top:4px;" width="546" height="8" viewBox="0 0 546 8"><rect x="8" y="4" width="1" height="1" fill="#6e6e6e"/><rect x="15" y="3" width="1" height="3" fill="#6e6e6e"/><rect x="21" y="4" width="1" height="1" fill="#6e6e6e"/><rect x="34" y="4" width="1" height="1" fill="#6e6e6e"/><rect x="41" y="3" width="1" height="3" fill="#6e6e6e"/><rect x="47" y="4" width="1" height="1" fill="#6e6e6e"/><rect x="60" y="4" width="1" height="1" fill="#6e6e6e"/><rect x="67" y="3" width="1" height="3" fill="#6e6e6e"/><rect x="73" y="4" width="1" height="1" fill="#6e6e6e"/><rect x="86" y="4" width="1" height="1" fill="#6e6e6e"/><rect x="93" y="3" width="1" height="3" fill="#6e6e6e"/><rect x="99" y="4" width="1" height="1" fill="#6e6e6e"/><rect x="112" y="4" width="1" height="1" fill="#6e6e6e"/><rect x="118" y="3" width="1" height="3" fill="#6e6e6e"/><rect x="125" y="4" width="1" height="1" fill="#6e6e6e"/><rect x="138" y="4" width="1" height="1" fill="#6e6e6e"/><rect x="144" y="3" width="1" height="3" fill="#6e6e6e"/><rect x="151" y="4" width="1" height="1" fill="#6e6e6e"/><rect x="164" y="4" width="1" height="1" fill="#6e6e6e"/><rect x="170" y="3" width="1" height="3" fill="#6e6e6e"/><rect x="177" y="4" width="1" height="1" fill="#6e6e6e"/><rect x="190" y="4" width="1" height="1" fill="#6e6e6e"/><rect x="196" y="3" width="1" height="3" fill="#6e6e6e"/><rect x="203" y="4" width="1" height="1" fill="#6e6e6e"/><rect x="216" y="4" width="1" height="1" fill="#6e6e6e"/><rect x="222" y="3" width="1" height="3" fill="#6e6e6e"/><rect x="229" y="4" width="1" height="1" fill="#6e6e6e"/><rect x="242" y="4" width="1" height="1" fill="#6e6e6e"/><rect x="248" y="3" width="1" height="3" fill="#6e6e6e"/><rect x="255" y="4" width="1" height="1" fill="#6e6e6e"/><rect x="268" y="4" width="1" height="1" fill="#6e6e6e"/><rect x="274" y="3" width="1" height="3" fill="#6e6e6e"/><rect x="280" y="4" width="1" height="1" fill="#6e6e6e"/><rect x="293" y="4" width="1" height="1" fill="#6e6e6e"/><rect x="300" y="3" width="1" height="3" fill="#6e6e6e"/><rect x="306" y="4" width="1" height="1" fill="#6e6e6e"/><rect x="319" y="4" width="1" height="1" fill="#6e6e6e"/><rect x="326" y="3" width="1" height="3" fill="#6e6e6e"/><rect x="332" y="4" width="1" height="1" fill="#6e6e6e"/><rect x="345" y="4" width="1" height="1" fill="#6e6e6e"/><rect x="352" y="3" width="1" height="3" fill="#6e6e6e"/><rect x="358" y="4" width="1" height="1" fill="#6e6e6e"/><rect x="371" y="4" width="1" height="1" fill="#6e6e6e"/><rect x="378" y="3" width="1" height="3" fill="#6e6e6e"/><rect x="384" y="4" width="1" height="1" fill="#6e6e6e"/><rect x="397" y="4" width="1" height="1" fill="#6e6e6e"/><rect x="404" y="3" width="1" height="3" fill="#6e6e6e"/><rect x="410" y="4" width="1" height="1" fill="#6e6e6e"/><rect x="423" y="4" width="1" height="1" fill="#6e6e6e"/><rect x="430" y="3" width="1" height="3" fill="#6e6e6e"/><rect x="436" y="4" width="1" height="1" fill="#6e6e6e"/><rect x="449" y="4" width="1" height="1" fill="#6e6e6e"/><rect x="455" y="3" width="1" height="3" fill="#6e6e6e"/><rect x="462" y="4" width="1" height="1" fill="#6e6e6e"/><rect x="475" y="4" width="1" height="1" fill="#6e6e6e"/><rect x="481" y="3" width="1" height="3" fill="#6e6e6e"/><rect x="488" y="4" width="1" height="1" fill="#6e6e6e"/><rect x="501" y="4" width="1" height="1" fill="#6e6e6e"/><rect x="507" y="3" width="1" height="3" fill="#6e6e6e"/><rect x="514" y="4" width="1" height="1" fill="#6e6e6e"/><rect x="527" y="4" width="1" height="1" fill="#6e6e6e"/><rect x="533" y="3" width="1" height="3" fill="#6e6e6e"/><rect x="540" y="4" width="1" height="1" fill="#6e6e6e"/></svg>
<svg style="left:153.5px;top:2px;" width="8" height="15" viewBox="0 0 8 15"><path d="M0.5 0.5 H7.5 V1.6 L4 5.4 L0.5 1.6 Z" fill="#fefefe" stroke="#8a8a8a" stroke-width=".8"/><path d="M0.5 10 V8.9 L4 5.4 L7.5 8.9 V10 Z" fill="#fefefe" stroke="#8a8a8a" stroke-width=".8"/><rect x="0.5" y="10.4" width="7" height="4" fill="#fefefe" stroke="#8a8a8a" stroke-width=".8"/></svg>
<svg style="left:542px;top:7.8px;" width="8" height="5" viewBox="0 0 8 5"><path d="M0.5 4.5 V3.4 L4 0.5 L7.5 3.4 V4.5 Z" fill="#fefefe" stroke="#8a8a8a" stroke-width=".8"/></svg>
<div class="vruler" style="left:3px;top:27px;width:6.5px;height:271px;background:#fefefe;"></div>
<div style="left:3px;top:27px;width:6.5px;height:67px;background:#cbcbcb;"></div>
<span class="t" style="left:0.30px;top:37.76px;width:14px;text-align:center;font-size:7.6px;color:#4a4a4a;transform-origin:50% 50%;transform:rotate(-90deg);">2</span>
<span class="t" style="left:0.30px;top:63.68px;width:14px;text-align:center;font-size:7.6px;color:#4a4a4a;transform-origin:50% 50%;transform:rotate(-90deg);">1</span>
<span class="t" style="left:0.30px;top:115.52px;width:14px;text-align:center;font-size:7.6px;color:#4a4a4a;transform-origin:50% 50%;transform:rotate(-90deg);">1</span>
<span class="t" style="left:0.30px;top:141.44px;width:14px;text-align:center;font-size:7.6px;color:#4a4a4a;transform-origin:50% 50%;transform:rotate(-90deg);">2</span>
<span class="t" style="left:0.30px;top:167.36px;width:14px;text-align:center;font-size:7.6px;color:#4a4a4a;transform-origin:50% 50%;transform:rotate(-90deg);">3</span>
<span class="t" style="left:0.30px;top:193.28px;width:14px;text-align:center;font-size:7.6px;color:#4a4a4a;transform-origin:50% 50%;transform:rotate(-90deg);">4</span>
<span class="t" style="left:0.30px;top:219.20px;width:14px;text-align:center;font-size:7.6px;color:#4a4a4a;transform-origin:50% 50%;transform:rotate(-90deg);">5</span>
<span class="t" style="left:0.30px;top:245.12px;width:14px;text-align:center;font-size:7.6px;color:#4a4a4a;transform-origin:50% 50%;transform:rotate(-90deg);">6</span>
<span class="t" style="left:0.30px;top:271.04px;width:14px;text-align:center;font-size:7.6px;color:#4a4a4a;transform-origin:50% 50%;transform:rotate(-90deg);">7</span>
<svg style="left:3px;top:27px;" width="6.5" height="271" viewBox="0 0 6.5 271"><rect x="2" y="1" width="3" height="1" fill="#6e6e6e"/><rect x="3" y="8" width="1" height="1" fill="#6e6e6e"/><rect x="3" y="21" width="1" height="1" fill="#6e6e6e"/><rect x="2" y="27" width="3" height="1" fill="#6e6e6e"/><rect x="3" y="34" width="1" height="1" fill="#6e6e6e"/><rect x="3" y="46" width="1" height="1" fill="#6e6e6e"/><rect x="2" y="53" width="3" height="1" fill="#6e6e6e"/><rect x="3" y="59" width="1" height="1" fill="#6e6e6e"/><rect x="3" y="72" width="1" height="1" fill="#6e6e6e"/><rect x="2" y="79" width="3" height="1" fill="#6e6e6e"/><rect x="3" y="85" width="1" height="1" fill="#6e6e6e"/><rect x="3" y="98" width="1" height="1" fill="#6e6e6e"/><rect x="2" y="105" width="3" height="1" fill="#6e6e6e"/><rect x="3" y="111" width="1" height="1" fill="#6e6e6e"/><rect x="3" y="124" width="1" height="1" fill="#6e6e6e"/><rect x="2" y="131" width="3" height="1" fill="#6e6e6e"/><rect x="3" y="137" width="1" height="1" fill="#6e6e6e"/><rect x="3" y="150" width="1" height="1" fill="#6e6e6e"/><rect x="2" y="157" width="3" height="1" fill="#6e6e6e"/><rect x="3" y="163" width="1" height="1" fill="#6e6e6e"/><rect x="3" y="176" width="1" height="1" fill="#6e6e6e"/><rect x="2" y="183" width="3" height="1" fill="#6e6e6e"/><rect x="3" y="189" width="1" height="1" fill="#6e6e6e"/><rect x="3" y="202" width="1" height="1" fill="#6e6e6e"/><rect x="2" y="208" width="3" height="1" fill="#6e6e6e"/><rect x="3" y="215" width="1" height="1" fill="#6e6e6e"/><rect x="3" y="228" width="1" height="1" fill="#6e6e6e"/><rect x="2" y="234" width="3" height="1" fill="#6e6e6e"/><rect x="3" y="241" width="1" height="1" fill="#6e6e6e"/><rect x="3" y="254" width="1" height="1" fill="#6e6e6e"/><rect x="2" y="260" width="3" height="1" fill="#6e6e6e"/><rect x="3" y="267" width="1" height="1" fill="#6e6e6e"/></svg>
<div class="page" style="left:80px;top:29px;width:543.5px;height:271px;background:#fff;border-top:1px solid #ededed;"></div>
<div class="caret" style="left:158px;top:93px;width:1px;height:13px;background:#333;"></div>
<div class="vscroll" style="left:664px;top:2px;width:10px;height:298px;background:#dbdbdb;border-left:1px solid #e9e9e9;"></div>
<div style="left:664px;top:2px;width:10px;height:10.5px;background:#fff;border:1px solid #d4d4d4;border-right:0;"></div>
<svg style="left:666.5px;top:5.3px;" width="5" height="3" viewBox="0 0 5 3"><path d="M0 3 L2.5 0 L5 3 Z" fill="#5e5e5e"/></svg>
<div style="left:664px;top:12px;width:10px;height:98.5px;background:#fff;border:1px solid #d8d8d8;border-right:0;border-top-color:#c9c9c9;"></div>
<div style="left:664px;top:288px;width:10px;height:10.5px;background:#fff;border:1px solid #d4d4d4;border-right:0;"></div>
<svg style="left:666.5px;top:292.6px;" width="5" height="2.6" viewBox="0 0 5 2.6"><path d="M0 0 L2.5 2.6 L5 0 Z" fill="#5e5e5e"/></svg>
</main>
<footer class="statusbar" style="left:1px;top:411px;width:674px;height:14px;background:#f3f3f3;border-bottom:1px solid #7a7a7a;">
<div style="left:0px;top:0px;width:674px;height:1px;background:#e4e4e4;"></div>
<span class="t" style="left:3.50px;top:4.10px;font-size:7.7px;color:#333;transform:scaleX(0.9905);">Página 1 de 1</span>
<span class="t" style="left:65.00px;top:4.10px;font-size:7.7px;color:#333;transform:scaleX(0.9748);">0 palabras</span>
<span class="t" style="left:113.50px;top:4.10px;font-size:7.7px;color:#333;transform:scaleX(1.0552);">Insertar</span>
<svg style="left:409px;top:3px;" width="10" height="9" viewBox="0 0 10 9"><path d="M2.5 0.9 H6 L7.8 2.7 V8 H2.5 Z" fill="#fff" stroke="#3a3a3a" stroke-width="1"/><path d="M5.8 1 V3 H7.8" fill="none" stroke="#3a3a3a" stroke-width=".7"/><path d="M0.4 2 V0.4 H1.8 M8.2 0.4 H9.6 V2 M9.6 7 V8.6 H8.2 M1.8 8.6 H0.4 V7" fill="none" stroke="#555" stroke-width=".7"/></svg>
<span class="t" style="left:421.80px;top:4.10px;font-size:7.7px;color:#333;transform:scaleX(1.0125);">Enfoque</span>
<svg style="left:468px;top:3.5px;" width="9.5" height="7.5" viewBox="0 0 9.5 7.5"><rect x="0.3" y="0.3" width="4.2" height="6.9" fill="#4a4a4a"/><rect x="5" y="0.3" width="4.2" height="6.9" fill="#4a4a4a"/><path d="M1.3 2 H3.5 M1.3 3.7 H3.5 M1.3 5.4 H3.5 M6 2 H8.2 M6 3.7 H8.2 M6 5.4 H8.2" stroke="#f3f3f3" stroke-width=".8"/></svg>
<div style="left:487px;top:1px;width:26.5px;height:12px;background:#c6c6c6;"></div>
<svg style="left:496.3px;top:3.2px;" width="8.4" height="9" viewBox="0 0 8.4 9"><rect x="0.6" y="0.6" width="7.2" height="7.8" fill="#f6f6f6" stroke="#2e2e2e" stroke-width="1.2"/><path d="M0.6 1.5 H7.8" stroke="#2e2e2e" stroke-width="1.6"/><path d="M1.8 4.6 H6.6" stroke="#2e2e2e" stroke-width="1.8"/><path d="M0.6 7.8 H7.8" stroke="#2e2e2e" stroke-width="1.2"/></svg>
<svg style="left:523px;top:3.2px;" width="10.5" height="9" viewBox="0 0 10.5 9"><rect x="0.5" y="0.5" width="8" height="7.4" fill="#fff" stroke="#3a3a3a" stroke-width="1"/><path d="M0.5 2.2 H8.5" stroke="#3a3a3a" stroke-width="1"/><path d="M1.8 3.9 H3.8 M1.8 5.5 H3.8" stroke="#555" stroke-width=".7"/><circle cx="7.4" cy="6.2" r="2.5" fill="#4a4a4a"/><path d="M5.4 6.2 H9.4 M7.4 4 V8.4" stroke="#d8d8d8" stroke-width=".5"/></svg>
<div style="left:546.5px;top:7px;width:4.5px;height:1px;background:#666;"></div>
<div style="left:555px;top:7px;width:68px;height:1px;background:#b9b9b9;"></div>
<div style="left:587px;top:3px;width:3.5px;height:8.5px;background:#666;"></div>
<div style="left:627px;top:7px;width:4.5px;height:1px;background:#666;"></div>
<div style="left:629px;top:5px;width:1px;height:5px;background:#777;"></div>
<span class="t" style="left:642.00px;top:4.10px;font-size:7.7px;color:#333;transform:scaleX(0.8711);">100 %</span>
</footer>
</div>
</body>
</html>
